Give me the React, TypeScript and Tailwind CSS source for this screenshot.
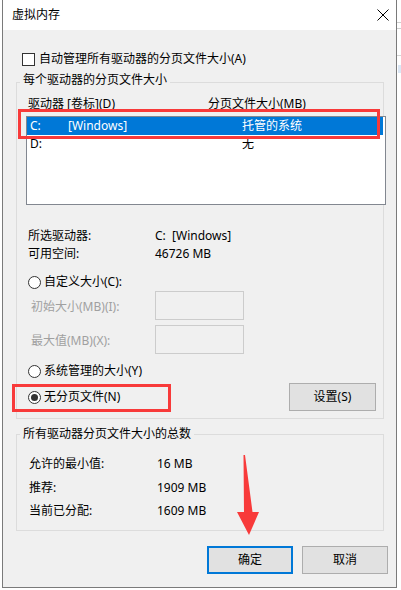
import React from 'react'

const font = "font-['Noto_Sans','Noto_Sans_CJK_SC',sans-serif]"

function Radio({ checked = false }: { checked?: boolean }) {
  return (
    <span className="flex h-[13px] w-[13px] shrink-0 items-center justify-center rounded-full border border-[#333333] bg-white">
      {checked && <span className="h-[7px] w-[7px] rounded-full bg-[#333333]" />}
    </span>
  )
}

function GroupLabel({ title, top }: { title: string; top: string }) {
  return (
    <span className={`absolute left-[3px] ${top} bg-[#f0f0f0] px-[3px] leading-[16px]`}>{title}</span>
  )
}

function SizeInput() {
  return <div className="h-[29px] w-[89px] border border-[#cccccc] bg-[#f0f0f0]" />
}

export default function App() {
  return (
    <div className={`relative h-[590px] w-[401px] overflow-hidden bg-white text-[12px] text-black ${font}`}>
      {/* fragments of the window behind */}
      <div className="absolute left-[397px] top-[22px] h-px w-[4px] bg-[#cfcfcf]" />
      <div className="absolute left-[397px] top-[28px] h-px w-[4px] bg-[#cfcfcf]" />
      <div className="absolute left-[397px] top-[55px] h-px w-[4px] bg-[#d6d6d6]" />
      <div className="absolute left-[398px] top-[65px] h-[8px] w-[3px] bg-[#dbe7f5]" />

      {/* Dialog window */}
      <div className="ml-[2px] flex h-[588px] w-[395px] flex-col border-x border-b border-[#7a7a7a]">
        {/* Title bar */}
        <div className="flex h-[30px] shrink-0 items-center justify-between bg-white pl-[9px] pr-[7px]">
          <span className="leading-[16px]">虚拟内存</span>
          <svg width="12" height="12" viewBox="0 0 12 12">
            <path d="M0.5 0.5 L11.5 11.5 M11.5 0.5 L0.5 11.5" stroke="#000" strokeWidth="1" fill="none" />
          </svg>
        </div>

        {/* Content */}
        <div className="flex flex-1 flex-col bg-[#f0f0f0]">
          {/* Auto manage checkbox */}
          <div className="mt-[21px] flex h-[16px] items-center gap-[4px] pl-[19px]">
            <span className="h-[13px] w-[13px] shrink-0 border border-[#333333] bg-white" />
            <span className="leading-[16px]">自动管理所有驱动器的分页文件大小(A)</span>
          </div>

          {/* Per-drive group */}
          <div className="relative ml-[13px] mt-[15px] flex h-[337px] w-[368px] flex-col border border-[#dcdcdc]">
            <GroupLabel title="每个驱动器的分页文件大小" top="top-[-11px]" />

            <div className="mt-[13px] flex h-[16px] items-center pl-[11px] leading-[16px]">
              <span className="w-[180px]">驱动器 [卷标](D)</span>
              <span>分页文件大小(MB)</span>
            </div>

            <div className="ml-[9px] mt-[4px] h-[89px] w-[360px] shrink-0 border border-[#828790] bg-white leading-[16px]">
              <div className="flex h-[18px] w-[356px] items-center bg-[#0078d7] pl-[3px] text-white">
                <span className="w-[38px]">C:</span>
                <span className="w-[174px]">[Windows]</span>
                <span>托管的系统</span>
              </div>
              <div className="flex h-[18px] items-center pl-[3px]">
                <span className="w-[212px]">D:</span>
                <span>无</span>
              </div>
            </div>

            <div className="mt-[23px] flex h-[16px] items-center pl-[11px] leading-[16px]">
              <span className="w-[127px]">所选驱动器:</span>
              <span>C:&nbsp;&nbsp;[Windows]</span>
            </div>
            <div className="mt-[2px] flex h-[16px] items-center pl-[11px] leading-[16px]">
              <span className="w-[127px]">可用空间:</span>
              <span>46726 MB</span>
            </div>

            <div className="mt-[12px] flex h-[16px] items-center gap-[3px] pl-[11px] leading-[16px]">
              <Radio />
              <span>自定义大小(C):</span>
            </div>

            <div className="mt-px flex h-[29px] items-center pl-[14px] leading-[16px] text-[#a0a0a0]">
              <span className="w-[124px] pt-[2px]">初始大小(MB)(I):</span>
              <SizeInput />
            </div>
            <div className="mt-[5px] flex h-[29px] items-center pl-[14px] leading-[16px] text-[#a0a0a0]">
              <span className="w-[124px] pt-[2px]">最大值(MB)(X):</span>
              <SizeInput />
            </div>

            <div className="mt-[9px] flex h-[16px] items-center gap-[3px] pl-[11px] leading-[16px]">
              <Radio />
              <span>系统管理的大小(Y)</span>
            </div>

            <div className="mt-[4px] flex h-[28px] items-center justify-between pl-[11px] pr-[7px] leading-[16px]">
              <div className="flex items-center gap-[3px]">
                <Radio checked />
                <span>无分页文件(N)</span>
              </div>
              <button className="flex h-[28px] w-[87px] items-center justify-center border border-[#adadad] bg-[#e1e1e1]">
                设置(S)
              </button>
            </div>
          </div>

          {/* Totals group */}
          <div className="relative ml-[13px] mt-[15px] flex h-[97px] w-[368px] flex-col border border-[#dcdcdc] pl-[12px] leading-[16px]">
            <GroupLabel title="所有驱动器分页文件大小的总数" top="top-[-9px]" />
            <div className="mt-[21px] flex h-[16px] items-center">
              <span className="w-[128px]">允许的最小值:</span>
              <span>16 MB</span>
            </div>
            <div className="mt-[8px] flex h-[16px] items-center">
              <span className="w-[128px]">推荐:</span>
              <span>1909 MB</span>
            </div>
            <div className="mt-[7px] flex h-[16px] items-center">
              <span className="w-[128px]">当前已分配:</span>
              <span>1609 MB</span>
            </div>
          </div>

          {/* Dialog buttons */}
          <div className="mt-[15px] flex justify-end gap-[9px] pr-[8px] leading-[16px]">
            <button className="flex h-[28px] w-[86px] items-center justify-center border-2 border-[#0078d7] bg-[#e1e1e1]">
              确定
            </button>
            <button className="flex h-[28px] w-[86px] items-center justify-center border border-[#adadad] bg-[#e1e1e1]">
              取消
            </button>
          </div>
        </div>
      </div>

      {/* Red annotations */}
      <div className="pointer-events-none absolute left-[18px] top-[109px] h-[30px] w-[362px] border-[3px] border-[#f83a3a]" />
      <div className="pointer-events-none absolute left-[12px] top-[384px] h-[28px] w-[159px] border-[3px] border-[#f83a3a]" />
      <svg className="pointer-events-none absolute left-[236px] top-[454px]" width="24" height="82" viewBox="0 0 24 82">
        <polygon points="7.5,1 9,1 16.5,58 23,58 13,81 1,58 8,58" fill="#f83a3a" />
      </svg>
    </div>
  )
}
